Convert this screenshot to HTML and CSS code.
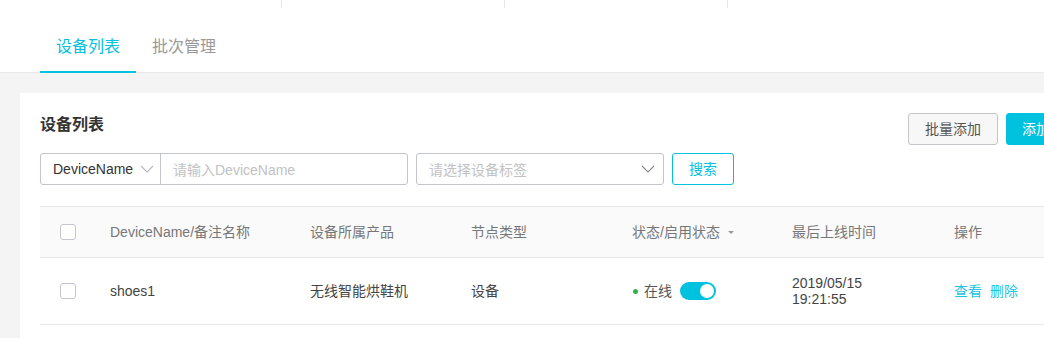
FILE: index.html
```html
<!DOCTYPE html>
<html lang="zh-CN">
<head>
<meta charset="utf-8">
<title>设备列表</title>
<link rel="stylesheet" href="styles.css">
</head>
<body>
<div class="page">
  <div class="stat-strip">
    <div class="stat-cell first"></div>
    <div class="stat-cell"></div>
    <div class="stat-cell"></div>
    <div class="stat-cell"></div>
  </div>
  <div class="tabs">
    <div class="tab active">设备列表</div>
    <div class="tab">批次管理</div>
  </div>
  <div class="content">
    <div class="card">
      <div class="title-row">
        <h2 class="title">设备列表</h2>
        <div class="actions">
          <button class="btn btn-normal">批量添加</button>
          <button class="btn btn-primary">添加设备</button>
        </div>
      </div>
      <div class="search-row">
        <div class="combo">
          <div class="combo-select">
            <span>DeviceName</span>
            <svg class="chev" width="14" height="8" viewBox="0 0 14 8"><path d="M1 1 L7 7 L13 1" fill="none" stroke="#b5b7be" stroke-width="1.1"/></svg>
          </div>
          <div class="combo-input">请输入DeviceName</div>
        </div>
        <div class="tag-select">
          <span>请选择设备标签</span>
          <svg class="chev" width="14" height="8" viewBox="0 0 14 8"><path d="M1 1 L7 7 L13 1" fill="none" stroke="#888" stroke-width="1.1"/></svg>
        </div>
        <button class="btn btn-search">搜索</button>
      </div>
      <div class="table">
        <div class="tr thead">
          <div class="td"><span class="checkbox"></span></div>
          <div class="td">DeviceName/备注名称</div>
          <div class="td">设备所属产品</div>
          <div class="td">节点类型</div>
          <div class="td">状态/启用状态<span class="sort"></span></div>
          <div class="td">最后上线时间</div>
          <div class="td">操作</div>
        </div>
        <div class="tr tbody">
          <div class="td"><span class="checkbox"></span></div>
          <div class="td">shoes1</div>
          <div class="td">无线智能烘鞋机</div>
          <div class="td">设备</div>
          <div class="td status"><span class="dot"></span><span class="online">在线</span><span class="switch"><span class="knob"></span></span></div>
          <div class="td time">2019/05/15<br>19:21:55</div>
          <div class="td ops"><a class="link">查看</a><a class="link">删除</a></div>
        </div>
      </div>
    </div>
  </div>
</div>
</body>
</html>
```
FILE: styles.css
```css
html, body {
  margin: 0;
  padding: 0;
  overflow: hidden;
  background: #f4f4f4;
}
body {
  font-family: "Liberation Sans", "Noto Sans CJK SC", sans-serif;
  color: #333;
  font-size: 14px;
}
.page {
  width: 1114px;
  height: 338px;
  overflow: hidden;
  background: #f4f4f4;
}
.stat-strip {
  display: flex;
  height: 8px;
  background: #fff;
  padding-left: 58px;
}
.stat-cell {
  width: 222px;
  border-left: 1px solid #e6e6e6;
}
.stat-cell.first {
  border-left: none;
  width: 223px;
}
.tabs {
  display: flex;
  background: #fff;
  padding-left: 40px;
  border-bottom: 1px solid #e8e8e8;
}
.tab {
  position: relative;
  padding: 27px 16px 13px;
  font-size: 16px;
  line-height: 24px;
  color: #999;
}
.tab.active {
  color: #00c1de;
}
.tab.active::after {
  content: "";
  position: absolute;
  left: 0;
  right: 0;
  bottom: -1px;
  height: 2px;
  background: #00c1de;
}
.content {
  padding: 20px 0 0 20px;
}
.card {
  background: #fff;
  padding: 20px 20px 0;
  height: 245px;
}
.title-row {
  display: flex;
  justify-content: space-between;
  align-items: flex-start;
}
.title {
  margin: 0;
  font-size: 16px;
  font-weight: bold;
  line-height: 24px;
  color: #333;
}
.actions {
  display: flex;
  gap: 8px;
}
.btn {
  font-family: inherit;
  font-size: 14px;
  height: 32px;
  border-radius: 3px;
  padding: 0 15px;
  line-height: 30px;
  cursor: pointer;
}
.btn-normal {
  background: #f7f7f7;
  border: 1px solid #c4c6cf;
  color: #555;
  width: 90px;
}
.btn-primary {
  background: #00c1de;
  border: 1px solid #00c1de;
  color: #fff;
  width: 88px;
}
.search-row {
  display: flex;
  align-items: center;
  margin-top: 8px;
  gap: 8px;
}
.combo {
  display: flex;
  height: 32px;
  width: 368px;
  border: 1px solid #c4c6cf;
  border-radius: 3px;
  box-sizing: border-box;
}
.combo-select {
  width: 120px;
  box-sizing: border-box;
  padding-left: 12px;
  padding-right: 6px;
  display: flex;
  align-items: center;
  justify-content: space-between;
  border-right: 1px solid #c4c6cf;
  color: #333;
}
.combo-input {
  flex: 1;
  display: flex;
  align-items: center;
  padding-left: 12px;
  color: #c2c2c2;
}
.tag-select {
  width: 248px;
  height: 32px;
  box-sizing: border-box;
  border: 1px solid #c4c6cf;
  border-radius: 3px;
  display: flex;
  align-items: center;
  justify-content: space-between;
  padding: 0 8px 0 12px;
  color: #c2c2c2;
}
.btn-search {
  width: 62px;
  padding: 0;
  background: #fff;
  border: 1px solid #00c1de;
  color: #00c1de;
}
.table {
  margin-top: 21px;
  border-top: 1px solid #e8e8e8;
}
.tr {
  display: grid;
  grid-template-columns: 50px 200px 161px 161px 160px 162px 1fr;
  border-bottom: 1px solid #e8e8e8;
  align-items: center;
}
.thead {
  height: 50px;
  background: #fafafa;
  color: #777;
}
.tbody {
  height: 66px;
  color: #444;
}
.td {
  padding-left: 20px;
  line-height: 20px;
  display: flex;
  align-items: center;
  white-space: nowrap;
}
.checkbox {
  display: inline-block;
  width: 16px;
  height: 16px;
  box-sizing: border-box;
  border: 1px solid #c4c6cf;
  border-radius: 3px;
  background: #fff;
}
.sort {
  display: inline-block;
  width: 0;
  height: 0;
  margin-left: 8px;
  border-left: 3px solid transparent;
  border-right: 3px solid transparent;
  border-top: 3px solid #999;
}
.status .dot {
  width: 5px;
  height: 5px;
  border-radius: 50%;
  background: #2fb54a;
  margin-left: 1px;
  margin-right: 6px;
}
.online {
  color: #555;
}
.switch {
  position: relative;
  width: 36px;
  height: 18px;
  border-radius: 9px;
  background: #00c1de;
  margin-left: 8px;
}
.knob {
  position: absolute;
  right: 2px;
  top: 2px;
  width: 14px;
  height: 14px;
  border-radius: 50%;
  background: #fff;
}
.time {
  display: block;
  line-height: 16px;
}
.ops {
  gap: 8px;
}
.link {
  color: #22c3e0;
  cursor: pointer;
}
```
